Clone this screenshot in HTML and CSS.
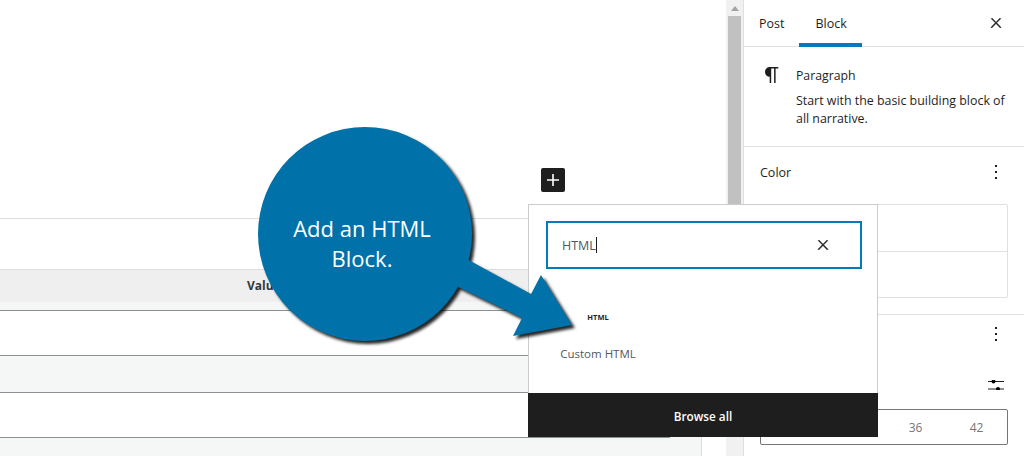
FILE: index.html
```html
<!DOCTYPE html>
<html lang="en">
<head>
<meta charset="utf-8">
<title>Add an HTML Block</title>
<link rel="stylesheet" href="styles.css">
</head>
<body>
<div class="page">
  <main class="editor">
    <div class="rule"></div>
    <div class="table">
      <div class="thead">Value</div>
      <div class="tpad"></div>
      <div class="row row-white"></div>
      <div class="row row-grey"></div>
      <div class="row row-white"></div>
      <div class="row-last"></div>
    </div>
  </main>
  <div class="scrollbar">
    <span class="scroll-arrow"></span>
    <span class="scroll-thumb"></span>
  </div>
  <aside class="sidebar">
    <div class="tabs">
      <span class="tab">Post</span>
      <span class="tab tab-active">Block</span>
      <svg class="tabs-close" viewBox="0 0 24 24" width="16" height="16"><path d="M13 11.8l6.1-6.3-1-1-6.1 6.2-6.1-6.2-1 1 6.1 6.3-6.5 6.7 1 1 6.5-6.6 6.5 6.6 1-1z"/></svg>
    </div>
    <section class="card">
      <svg class="card-icon" viewBox="0 0 24 24" width="24" height="24"><path d="M18.3 4H9.9v-.1l-.9.2c-2.3.4-4 2.4-4 4.8s1.7 4.4 4 4.8l.7.1V20h1.5V5.5h2.9V20h1.5V5.5h2.7V4z"/></svg>
      <div class="card-body">
        <h2 class="card-title">Paragraph</h2>
        <p class="card-text">Start with the basic building block of all narrative.</p>
      </div>
    </section>
    <section class="color">
      <div class="panel-head">
        <span>Color</span>
        <svg class="more" viewBox="0 0 24 24" width="24" height="24"><path d="M13 19h-2v-2h2v2zm0-6h-2v-2h2v2zm0-6h-2V5h2v2z"/></svg>
      </div>
      <div class="color-box">
        <div class="color-row"></div>
        <div class="color-row"></div>
      </div>
    </section>
    <section class="typo">
      <div class="typo-more">
        <svg class="more" viewBox="0 0 24 24" width="24" height="24"><path d="M13 19h-2v-2h2v2zm0-6h-2v-2h2v2zm0-6h-2V5h2v2z"/></svg>
      </div>
      <div class="typo-filter">
        <svg viewBox="0 0 16 10" width="16" height="10"><path d="M0 1.5h16M0 9h16" stroke="#1e1e1e" stroke-width="1"/><circle cx="5.5" cy="1.5" r="2"/><circle cx="10" cy="9" r="2"/></svg>
      </div>
      <div class="sizes">
        <span class="size">36</span>
        <span class="size">42</span>
      </div>
    </section>
  </aside>

  <button class="plus" type="button" aria-label="Add block">
    <svg viewBox="0 0 24 24" width="24" height="24"><path d="M18 11.2h-5.2V6h-1.6v5.2H6v1.6h5.2V18h1.6v-5.2H18z"/></svg>
  </button>

  <div class="popup">
    <div class="popup-main">
      <div class="search">
        <span class="search-text">HTML</span><span class="caret"></span>
        <svg class="search-x" viewBox="0 0 24 24" width="16" height="16"><path d="M13 11.8l6.1-6.3-1-1-6.1 6.2-6.1-6.2-1 1 6.1 6.3-6.5 6.7 1 1 6.5-6.6 6.5 6.6 1-1z"/></svg>
      </div>
      <div class="result">
        <span class="result-icon">HTML</span>
        <span class="result-label">Custom HTML</span>
      </div>
    </div>
    <div class="browse">Browse all</div>
  </div>

  <div class="callout">
    <svg class="callout-shape" viewBox="0 0 330 220" width="330" height="220">
      <circle cx="107" cy="107" r="107"/>
      <polygon points="205,130 273,167 283,148 314,198 255,209 264,191 190,155"/>
    </svg>
    <p class="callout-text">Add an HTML<br>Block.</p>
  </div>
</div>
</body>
</html>
```
FILE: styles.css
```css
* { box-sizing: border-box; }
html, body { margin: 0; padding: 0; background: #fff; }
body { font-family: "Open Sans", "Noto Sans", sans-serif; color: #1e1e1e; font-size: 12px; }

.page { position: relative; display: flex; width: 1024px; height: 456px; overflow: hidden; }

.editor { width: 726px; flex: none; padding-top: 218px; overflow: hidden; }
.rule { height: 1px; background: #ddd; }
.table { margin-top: 50px; width: 702px; border-right: 1px solid #ddd; }
.thead { height: 33px; background: #efefef; border-top: 1px solid #ddd; padding-left: 247px; font-weight: 700; line-height: 31px; color: #32373c; }
.tpad { height: 8px; background: #f5f7f7; }
.row { border-top: 1px solid #8c8f94; }
.row-white { height: 45px; background: #fff; }
.row-grey { height: 37px; background: #f5f7f7; }
.row-last { height: 19px; background: #f5f7f7; }
.row-last::before { content: ""; display: block; width: 670px; height: 1px; background: #8c8f94; }

.scrollbar { width: 17px; flex: none; background: #f1f1f1; display: flex; flex-direction: column; align-items: center; padding-top: 6px; }
.scroll-arrow { width: 0; height: 0; border-left: 4px solid transparent; border-right: 4px solid transparent; border-bottom: 5px solid #a3a3a3; }
.scroll-thumb { width: 13px; height: 190px; background: #c1c1c1; margin-top: 5px; }

.sidebar { flex: 1; border-left: 1px solid #e0e0e0; font-size: 12px; }
.tabs { position: relative; display: flex; height: 47px; border-bottom: 1px solid #e0e0e0; padding-left: 15px; gap: 31px; }
.tab { font-size: 12.5px; line-height: 47px; height: 47px; }
.tab-active { position: relative; }
.tab-active::after { content: ""; position: absolute; left: -16px; right: -15px; bottom: 0; height: 4px; background: #007cba; }
.tabs-close { position: absolute; right: 20px; top: 15px; fill: #1e1e1e; stroke: #1e1e1e; stroke-width: 0.8; }

.card { display: flex; height: 100px; border-bottom: 1px solid #e0e0e0; padding: 16px 0 0 16px; gap: 12px; }
.card-icon { flex: none; fill: #1e1e1e; width: 24px; height: 24px; }
.card-body { width: 216px; }
.card-title { margin: 4px 0 7px; font-size: 12.25px; line-height: 18px; font-weight: 400; }
.card-text { margin: 0; font-size: 12.4px; line-height: 18px; }

.color { height: 168px; border-bottom: 1px solid #e0e0e0; padding: 0 16px; }
.panel-head { display: flex; align-items: center; justify-content: space-between; height: 50px; font-size: 12.5px; }
.more { fill: #1e1e1e; }
.color-box { margin-top: 7px; width: 248px; border: 1px solid #e0e0e0; border-radius: 2px; }
.color-row { height: 46px; }
.color-row + .color-row { border-top: 1px solid #e0e0e0; }

.typo { padding: 0 16px; }
.typo-more { display: flex; justify-content: flex-end; margin-top: 7px; height: 24px; }
.typo-filter { display: flex; justify-content: flex-end; margin-top: 34px; height: 10px; margin-right: 4px; }
.typo-filter svg { display: block; }
.sizes { display: flex; justify-content: flex-end; margin-top: 19px; width: 248px; height: 36px; border: 1px solid #757575; border-radius: 2px; }
.size { width: 61px; text-align: center; line-height: 35px; font-size: 12px; color: #757575; }

.plus { position: absolute; left: 541px; top: 168px; width: 24px; height: 24px; padding: 0; border: 0; border-radius: 2px; background: #1e1e1e; }
.plus svg { display: block; fill: #fff; }

.popup { position: absolute; left: 528px; top: 204px; width: 350px; height: 233px; background: #fff; border: 1px solid #ccc; border-bottom: 0; display: flex; flex-direction: column; }
.popup-main { flex: 1; padding: 16px 15px 0 17px; }
.search { position: relative; display: flex; align-items: center; height: 48px; border: 2px solid #007cba; padding: 1px 0 0 14px; font-size: 12.5px; color: #50575e; }
.caret { width: 1px; height: 16px; background: #1e1e1e; margin-top: -1px; }
.search-x { position: absolute; right: 29px; top: 14px; fill: #1e1e1e; stroke: #1e1e1e; stroke-width: 0.8; }
.result { display: flex; flex-direction: column; align-items: center; width: 76px; margin: 43px 0 0 14px; }
.result-icon { font-size: 7.5px; font-weight: 700; line-height: 10px; color: #1e1e1e; }
.result-label { margin-top: 23px; white-space: nowrap; font-size: 11.5px; line-height: 18px; color: #50575e; }
.browse { height: 44px; margin: 0 -1px; background: #1e1e1e; color: #fff; text-align: center; font-size: 11.75px; font-weight: 600; line-height: 47px; }

.callout { position: absolute; left: 258px; top: 127px; width: 214px; height: 214px; }
.callout-shape { position: absolute; left: 0; top: 0; fill: #0071a9; overflow: visible; filter: drop-shadow(3px 3px 1.5px rgba(0, 0, 0, 0.85)); }
.callout-text { position: relative; margin: 0; padding-top: 86px; padding-right: 6px; text-align: center; font-size: 22px; line-height: 30px; color: #fff; }
```
